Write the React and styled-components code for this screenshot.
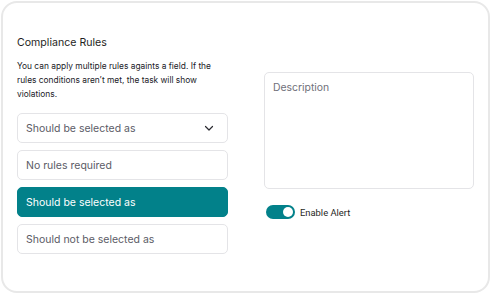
import React from 'react'
import styled, { createGlobalStyle } from 'styled-components'

const teal = '#02818a'

const GlobalStyle = createGlobalStyle`
  html, body {
    margin: 0;
    padding: 0;
    background: #ffffff;
  }
  body {
    font-family: Inter, "Noto Sans", sans-serif;
  }
`

const Card = styled.section`
  box-sizing: border-box;
  width: 489px;
  height: 292px;
  margin: 1px;
  border: 2px solid #e8e8e8;
  border-radius: 16px;
  padding: 31px 13px 0 14px;
  display: grid;
  grid-template-columns: 211px 210px;
  column-gap: 36px;
`

const LeftColumn = styled.div`
  display: flex;
  flex-direction: column;
`

const Title = styled.h2`
  margin: 0;
  font-size: 10.6px;
  font-weight: 400;
  line-height: 18px;
  color: #1f1f24;
`

const Description = styled.p`
  max-width: 200px;
  margin: 7px 0 12px;
  font-size: 8.4px;
  line-height: 14px;
  color: #222228;
`

const RuleList = styled.div`
  display: flex;
  flex-direction: column;
  gap: 7px;
`

const Option = styled.div`
  box-sizing: border-box;
  height: 30px;
  display: flex;
  align-items: center;
  justify-content: space-between;
  padding: 0 12px 0 8px;
  border: 1px solid ${({ $selected }) => ($selected ? teal : '#e4e4e7')};
  border-radius: 5px;
  background: ${({ $selected }) => ($selected ? teal : '#ffffff')};
  color: ${({ $selected }) => ($selected ? '#ffffff' : '#5b5b66')};
  font-size: 10.5px;
`

const RightColumn = styled.div`
  display: flex;
  flex-direction: column;
  padding-top: 38px;
`

const DescriptionBox = styled.div`
  box-sizing: border-box;
  height: 117px;
  border: 1px solid #e4e4e7;
  border-radius: 5px;
  padding: 8px 8px;
  font-size: 10.4px;
  color: #70707a;
`

const AlertRow = styled.label`
  display: flex;
  align-items: center;
  gap: 5px;
  margin-top: 16px;
  padding-left: 2px;
  font-family: Roboto, "Liberation Sans", sans-serif;
  font-size: 9.4px;
  color: #1f1f24;
`

const Toggle = styled.span`
  position: relative;
  width: 29px;
  height: 14px;
  border-radius: 7px;
  background: ${teal};

  &::after {
    content: '';
    position: absolute;
    top: 2px;
    right: 2px;
    width: 10px;
    height: 10px;
    border-radius: 50%;
    background: #ffffff;
  }
`

const Chevron = () => (
  <svg width="12" height="12" viewBox="0 0 24 24" fill="none" stroke="#2a2a30" strokeWidth="2.4" strokeLinecap="round" strokeLinejoin="round">
    <path d="M5 9l7 7 7-7" />
  </svg>
)

const App = () => (
  <>
    <GlobalStyle />
    <Card>
      <LeftColumn>
        <Title>Compliance Rules</Title>
        <Description>
          You can apply multiple rules againts a field. If the rules conditions aren’t met, the task will show violations.
        </Description>
        <RuleList>
          <Option>
            Should be selected as
            <Chevron />
          </Option>
          <Option>No rules required</Option>
          <Option $selected>Should be selected as</Option>
          <Option>Should not be selected as</Option>
        </RuleList>
      </LeftColumn>
      <RightColumn>
        <DescriptionBox>Description</DescriptionBox>
        <AlertRow>
          <Toggle />
          Enable Alert
        </AlertRow>
      </RightColumn>
    </Card>
  </>
)

export default App
